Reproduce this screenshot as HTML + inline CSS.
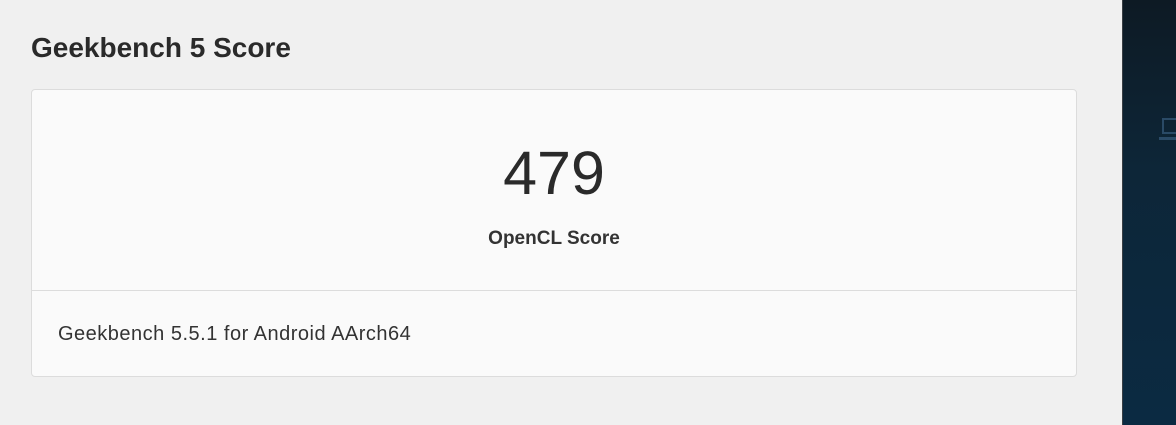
<!DOCTYPE html>
<html><head><style>
html,body{margin:0;padding:0}
body{width:1176px;height:425px;background:#f0f0f0;position:relative;overflow:hidden;font-family:"Liberation Sans",sans-serif;color:#333}
.t{position:absolute;left:31px;top:31px;font-size:28px;font-weight:bold;color:#2a2a2a;line-height:34px}
.card{position:absolute;left:31px;top:89px;width:1044px;height:286px;background:#fafafa;border:1px solid #dcdcdc;border-radius:4px}
.num{position:absolute;left:0;right:0;top:48px;text-align:center;font-size:61px;color:#2a2a2a;line-height:70px}
.lab{position:absolute;left:0;right:0;top:137px;text-align:center;font-size:19px;font-weight:bold;color:#333;line-height:24px}
.div{position:absolute;left:0;width:1044px;top:200px;height:1px;background:#dcdcdc}
.foot{position:absolute;left:26px;top:232px;font-size:20px;letter-spacing:0.5px;color:#333;line-height:24px}
.dark{position:absolute;left:1122px;top:0;width:54px;height:425px;background:linear-gradient(180deg,#0d1a24 0%,#0d2638 40%,#0b2a42 100%);border-left:1px solid #3a3f44}
</style></head><body>
<div class="t">Geekbench 5 Score</div>
<div class="card">
<div class="num">479</div>
<div class="lab">OpenCL Score</div>
<div class="div"></div>
<div class="foot">Geekbench 5.5.1 for Android AArch64</div>
</div>
<div class="dark"><svg width="54" height="425" style="position:absolute;left:0;top:0"><rect x="40" y="119" width="20" height="14" fill="none" stroke="#2a4a66" stroke-width="2"/><rect x="36" y="137" width="24" height="3" fill="#2a4a66"/></svg></div>
</body></html>
